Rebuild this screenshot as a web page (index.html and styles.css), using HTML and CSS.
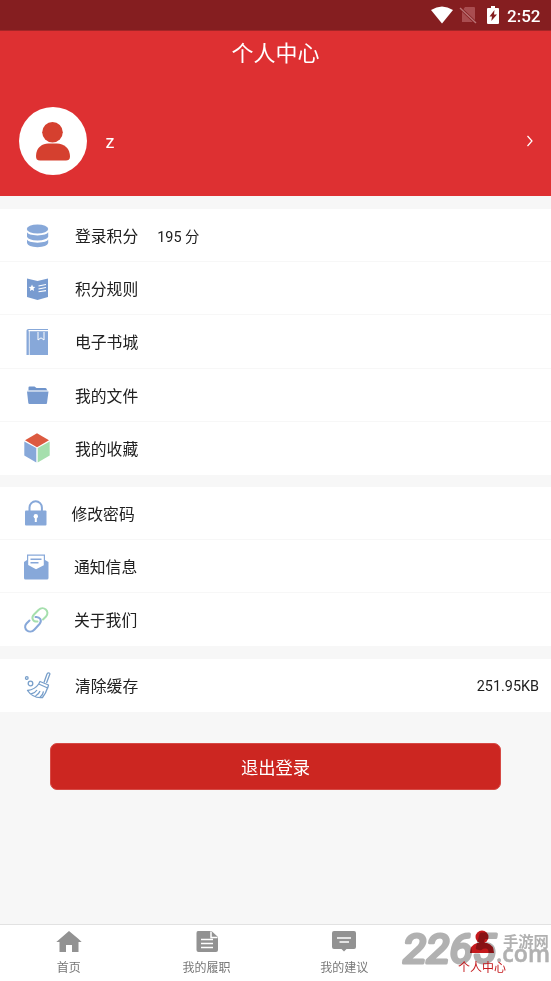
FILE: index.html
```html
<!DOCTYPE html>
<html lang="zh-CN">
<head>
<meta charset="utf-8">
<title>个人中心</title>
<link rel="stylesheet" href="styles.css">
</head>
<body>
<div class="app">
  <div class="status">
    <svg width="22" height="18" viewBox="0 0 22 18"><path fill="#fff" d="M0 4Q11-3 22 4L11 17.500Z"/></svg>
    <svg class="sim" width="18" height="18" viewBox="0 0 18 18"><path fill="#a94d50" d="M6 1h9q1 0 1 1v14H3V5z"/><path d="M1 2l16 15" stroke="#851e20" stroke-width="3"/><path d="M1 2l16 15" stroke="#b97375" stroke-width="1.400"/></svg>
    <svg class="battery" width="12" height="18" viewBox="0 0 12 18"><path fill="#fff" d="M4 0h4v2h3q1 0 1 1v14q0 1-1 1H1q-1 0-1-1V3q0-1 1-1h3z"/><path fill="#851e20" d="M7.500 4L2.500 10.500H5L4.300 15 10 8.500H7z"/></svg>
    <span class="time">2:52</span>
  </div>
  <header class="header">
    <h1>个人中心</h1>
    <div class="profile">
      <div class="avatar"><svg width="34" height="39" viewBox="0 0 34 39"><g fill="#d5402f"><circle cx="16.500" cy="10.300" r="10.300"/><path d="M0 34C0 25 7 21.500 12 21.500h9c7 0 13 5 13 13 0 3-2 4-4 4H4c-3 0-4-1.500-4-4.500z"/></g></svg></div>
      <span class="name">z</span>
      <svg class="chevron" width="8" height="12" viewBox="0 0 8 12"><path d="M1.500 1L6 6 1.500 11" fill="none" stroke="#fff" stroke-width="1.200"/></svg>
    </div>
  </header>

  <section class="group first">
    <div class="row"><svg class="icon" viewBox="0 0 28 30"><g fill="#87a8d9"><ellipse cx="14.500" cy="8" rx="10.700" ry="4.500"/><path d="M4 11.300q1 2.700 10.500 3.300 9.500-.6 10.700-3.300v4.400q-1.200 3.300-10.700 3.800Q5 19 4 15.700zM4 18.500q1 2.700 10.500 3.300 9.500-.6 10.700-3.300v3.500q-1.200 3.800-10.700 4.300Q5 25.800 4 22z"/></g></svg><span>登录积分</span><span class="points">195 分</span></div>
    <div class="row"><svg class="icon" viewBox="0 0 28 30"><path fill="#789bd0" d="M4 4.500l10.500 2.500L25 4.500V23l-10.500 3L4 23z"/><path fill="#fff" d="M9 10.500l1 2.200 2.300.3-1.700 1.600.4 2.400-2-1.200-2 1.200.4-2.400-1.700-1.600 2.300-.3z"/><path d="M15.500 12l7.500-1.500M15.500 15l7.500-1.500M15.500 17.800l7.500-1.200" stroke="#fff" stroke-width="1.100"/></svg><span>积分规则</span></div>
    <div class="row"><svg class="icon" viewBox="0 0 28 30"><path fill="#87a8d9" d="M3.500 3.500q0-1.500 2-1.500H25v1H5.500v1.300H25V28H3.500z"/><path d="M6.300 4v24" stroke="#fff" stroke-width=".8"/><path d="M15 5v8l3-2.200 3 2.200V5" fill="#87a8d9" stroke="#fff"/></svg><span>电子书城</span></div>
    <div class="row"><svg class="icon" viewBox="0 0 28 30"><path fill="#6f94cb" d="M5.500 10.500v-3q0-1 1-1h5l2 1.500h9q1.500 0 1.500 2.500z"/><path fill="#789bd0" d="M4 11.500h21.500L24 23q0 1-1 1H6.500q-1 0-1.200-1z"/><path d="M4.500 10.800h20.500" stroke="#c9d8ec" stroke-width=".8"/></svg><span>我的文件</span></div>
    <div class="row"><svg class="icon" viewBox="0 0 28 30"><path fill="#dc5a40" d="M14 .300l12 7L14 14.300 2 7.300z"/><path fill="#87a8d9" d="M1.300 8.500l12 6.500v14.500l-12-7z"/><path fill="#a5dfad" d="M26.700 8.500l-12 6.500v14.500l12-7z"/></svg><span>我的收藏</span></div>
  </section>

  <section class="group second">
    <div class="row lock"><svg class="icon" viewBox="0 0 28 30"><path d="M6.500 13V9.500a6.200 6.200 0 0 1 12.400 0V13" fill="none" stroke="#87a8d9" stroke-width="2"/><rect x="2" y="12.500" width="21.500" height="15" rx="1" fill="#87a8d9"/><circle cx="12.800" cy="18.200" r="2.200" fill="#fff"/><path d="M12.800 18v6" stroke="#fff" stroke-width="2"/></svg><span>修改密码</span></div>
    <div class="row notice"><svg class="icon" viewBox="0 0 28 30"><path fill="#87a8d9" d="M1 10l3-2V2.500h18V8l3.500 2v16q0 1.500-1.500 1.500H2.500Q1 27.500 1 26z"/><path fill="#fff" d="M5.200 3.700h15.600v9.500L13 17.200 5.200 13z"/><path d="M7.500 7.200h11M7.500 10.700h8" stroke="#87a8d9" stroke-width="1.500"/></svg><span>通知信息</span></div>
    <div class="row notice"><svg class="icon" viewBox="0 0 28 30"><g fill="none" stroke-width="2" stroke-linecap="round"><path stroke="#a5dfad" d="M14.500 16.500c-5 .5-6.500-4-3.500-7l4.500-4.500c5-5 12 1.500 7.500 6.500l-3 3"/><path stroke="#87a8d9" d="M12.500 12c4.500-.5 7 3.500 4 7l-5 5.500C6.500 30-1 23.500 3.500 18.500l3-3"/></g></svg><span>关于我们</span></div>
  </section>

  <section class="group third">
    <div class="row"><svg class="icon" viewBox="0 0 28 30"><g fill="none" stroke="#789fca" stroke-width="1.300" stroke-linejoin="round"><circle cx="3.800" cy="7" r="1.300"/><circle cx="7.500" cy="12.500" r="2.300"/><path d="M21 11.500l3-8.500q1-1.500 2.200-1t.3 2L23.500 12"/><path d="M17 10.500l8.500 3.500-.8 3-9-4zM15.700 13Q12 18.500 4.500 19.500 10 27.500 19.500 26.500 23 22 24.300 17.500M8 23q4-.8 6-4M12.500 25q3.500-2 4.500-5M17 26.300q3-2.500 3.500-6"/></g></svg><span>清除缓存</span><span class="size">251.95KB</span></div>
  </section>

  <button class="logout">退出登录</button>

  <nav class="tabs">
    <div class="tab"><svg width="26" height="24" viewBox="0 0 26 24"><path fill="#929292" d="M13 1L.3 12H3.500v10H10v-7h6v7h6.500V12h3.200L22 8.500z"/></svg><span>首页</span></div>
    <div class="tab"><svg width="26" height="24" viewBox="0 0 26 24"><path fill="#929292" d="M4 1h13.500l6.500 6v13q0 2-2 2H4.500q-2 0-2-2V3Q2.500 1 4 1z"/><path d="M17 1.500v6h6.500M7 9.500h12M7 13.500h12M7 17.500h12" stroke="#fff" stroke-width="1.500" fill="none"/></svg><span>我的履职</span></div>
    <div class="tab"><svg width="26" height="24" viewBox="0 0 26 24"><path fill="#929292" d="M3 1h20q2 0 2 2v14q0 2-2 2h-7.500L13 21.500 10.500 19H3q-2 0-2-2V3q0-2 2-2z"/><path d="M6 8h14M8.500 12h9.500" stroke="#fff" stroke-width="1.700"/></svg><span>我的建议</span></div>
    <div class="tab active"><svg width="26" height="24" viewBox="0 0 26 24"><g fill="#c51a1d"><circle cx="13" cy="7" r="6.500"/><path d="M1 23q0-8 7-10h10q7 2 7 10z"/></g></svg><span>个人中心</span></div>
    <svg class="watermark" width="151" height="55" viewBox="0 0 151 55"><g fill="#b1b1b1" stroke="#b1b1b1"><text x="3" y="38" class="wm-num" textLength="93" lengthAdjust="spacingAndGlyphs">2265</text><text x="103" y="21.500" class="wm-cn">手游网</text><text x="96" y="37" class="wm-com" textLength="54" lengthAdjust="spacingAndGlyphs">.com</text></g></svg>
  </nav>
</div>
</body>
</html>
```
FILE: styles.css
```css
* { box-sizing: border-box; }
body { margin: 0; background: #f7f7f7; font-family: Roboto, "Noto Sans CJK SC", sans-serif; color: #202020; }
.app { width: 551px; height: 981px; display: flex; flex-direction: column; }
.status { height: 31px; flex: none; background: #851e20; border-bottom: 1px solid #a52527; display: flex; align-items: center; justify-content: flex-end; padding-right: 10px; color: #fff; }
.sim { margin-left: 6px; }
.battery { margin-left: 10px; }
.time { font-size: 17px; font-weight: 500; margin-left: 8px; line-height: 30px; width: 34px; padding-top: 1px; white-space: nowrap; }
.header { height: 165px; flex: none; background: #de3032; color: #fff; }
h1 { margin: 0; font-size: 22px; font-weight: 400; line-height: 46px; height: 44px; text-align: center; }
.profile { display: flex; align-items: center; height: 68px; margin-top: 32px; padding: 0 17px 0 18.5px; }
.avatar { width: 68px; height: 68px; border-radius: 50%; background: #fff; display: flex; align-items: center; justify-content: center; }
.name { font-size: 18px; margin-left: 19px; padding-top: 1px; }
.chevron { margin-left: auto; }
.group { flex: none; background: #fff; display: grid; }
.first { height: 266px; margin-top: 13px; grid-template-rows: repeat(5, 1fr); }
.second { height: 159px; margin-top: 12px; grid-template-rows: repeat(3, 1fr); }
.third { height: 53px; margin-top: 13px; }
.row { display: flex; align-items: center; padding: 1px 12px 0 23px; font-size: 15.8px; border-bottom: 1px solid #f7f7f7; }
.row:last-child { border-bottom: 0; padding-top: 0; }
.icon { width: 28px; height: 30px; margin-right: 24px; flex: none; }
.lock { padding-top: 0; }
.lock .icon { margin-right: 20.5px; }
.notice .icon { margin-right: 23px; }
.points { font-size: 14.4px; margin-left: 19px; }
.size { font-size: 14.4px; margin-left: auto; padding-top: 1px; }
.logout { flex: none; width: 451px; height: 47px; margin: 31px 0 0 50px; padding: 0; border: 1px solid #d64a45; border-radius: 7px; background: #cc2621; color: #fff; font: 17.3px Roboto, "Noto Sans CJK SC", sans-serif; }
.tabs { position: relative; height: 57px; margin-top: auto; border-top: 1px solid #e2e2e2; background: #fff; display: grid; grid-template-columns: repeat(4, 1fr); }
.tab { display: flex; flex-direction: column; align-items: center; padding-top: 5px; color: #777; font-size: 12px; }
.tab span { line-height: 18px; margin-top: 5px; }
.active span { color: #c51a1d; position: relative; z-index: 2; }
.watermark { position: absolute; left: 400px; top: 0; mix-blend-mode: multiply; }
.wm-num { font: italic 400 40px Roboto, sans-serif; stroke-width: 3px; stroke-linejoin: round; }
.wm-cn { font: 700 15.3px "Noto Sans CJK SC", sans-serif; stroke-width: 0; }
.wm-com { font: 600 24px "Open Sans", sans-serif; stroke-width: .5px; }
```
